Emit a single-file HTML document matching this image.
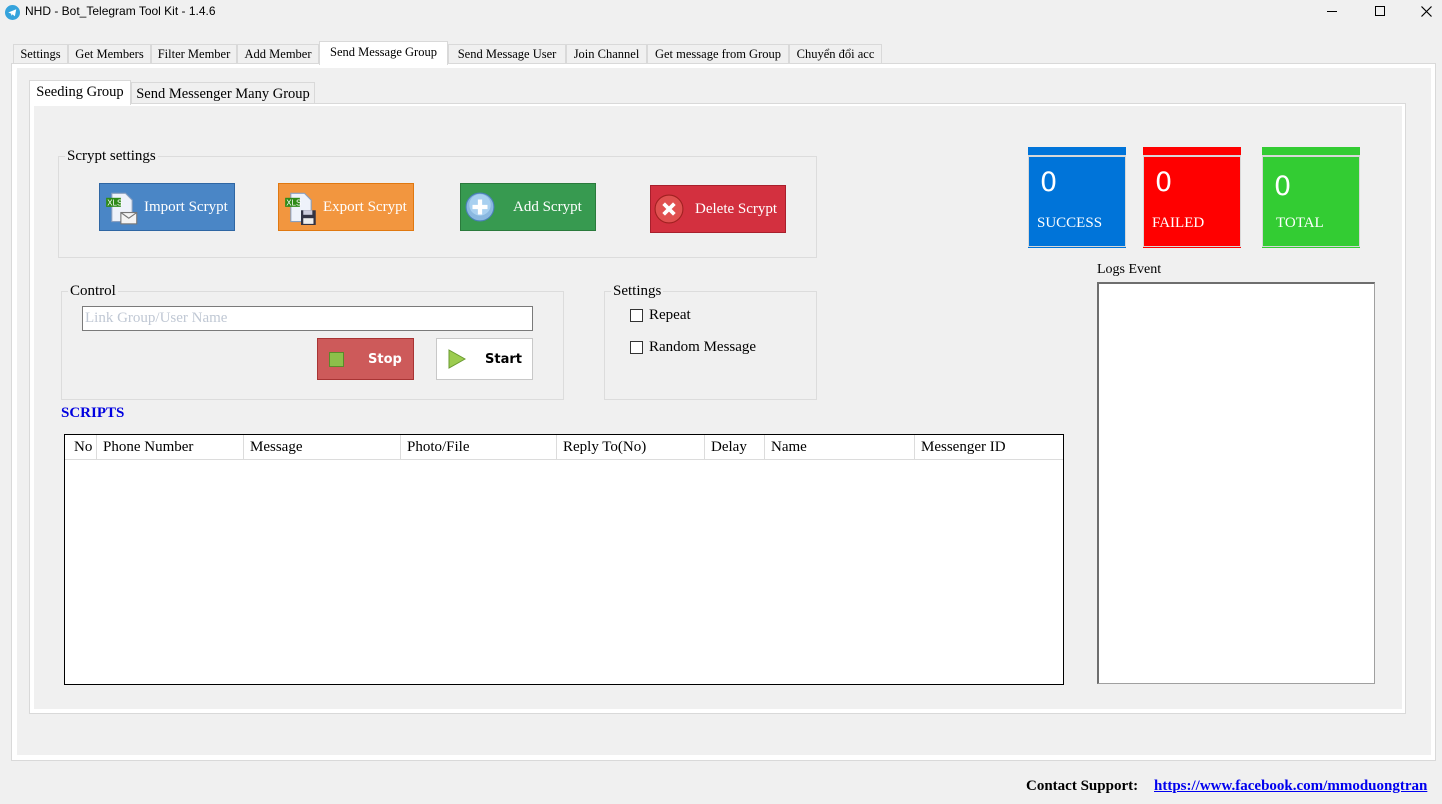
<!DOCTYPE html>
<html><head><meta charset="utf-8"><style>
*{box-sizing:border-box;margin:0;padding:0}
body{width:1442px;height:804px;background:#f0f0f0;position:relative;overflow:hidden;font-family:"Liberation Serif",serif;font-size:14px;color:#000}
.a{position:absolute}
.tab{position:absolute;top:44px;height:20px;border:1px solid #d9d9d9;background:#f0f0f0;font-size:12.5px;line-height:18px;text-align:center;white-space:nowrap}
.btn{position:absolute;color:#fff;font-size:15px;line-height:46px;white-space:nowrap}
.fs{position:absolute;border:1px solid #dcdcdc}
.lg{position:absolute;background:#f0f0f0;padding:0 2px;font-size:15px;line-height:16px}
.th{position:absolute;top:0;height:24px;border-right:1px solid #dcdcdc;line-height:24px;padding-left:6px;font-size:15px}
.stat{position:absolute;top:147px;width:98px;height:101px;color:#fff}
.stat .bar{height:8px}
.stat .body{position:absolute;top:10px;left:1px;right:1px;height:89px}
.stat .n{position:absolute;left:11px;top:10px;font-family:"DejaVu Sans",sans-serif;font-size:27px}
.stat .l{position:absolute;left:8px;top:58px;font-size:15px}
</style></head><body>
<svg class="a" style="left:5px;top:5px" width="15" height="15" viewBox="0 0 16 16"><circle cx="8" cy="8" r="8" fill="#35a3dc"/><path d="M3.5 8 L12 4.5 L10.5 12 L8 10 L6.8 11.5 L6.5 9.2 Z" fill="#fff"/></svg>
<div class="a" style="left:25px;top:4px;font-family:'Liberation Sans',sans-serif;font-size:12px">NHD - Bot_Telegram Tool Kit - 1.4.6</div>
<div class="a" style="left:1327px;top:11px;width:10px;height:1px;background:#000"></div>
<div class="a" style="left:1375px;top:6px;width:10px;height:10px;border:1px solid #000"></div>
<svg class="a" style="left:1421px;top:6px" width="11" height="11"><path d="M0.5 0.5L10.5 10.5M10.5 0.5L0.5 10.5" stroke="#000" stroke-width="1.2"/></svg>

<div class="a" style="left:11px;top:63px;width:1425px;height:698px;background:#fff;border:1px solid #d9d9d9"></div>
<div class="a" style="left:17px;top:68px;width:1414px;height:687px;background:#f0f0f0"></div>

<div class="tab" style="left:13px;width:55px">Settings</div>
<div class="tab" style="left:68px;width:83px">Get Members</div>
<div class="tab" style="left:151px;width:86px">Filter Member</div>
<div class="tab" style="left:237px;width:82px">Add Member</div>
<div class="tab" style="left:319px;top:41px;height:24px;width:129px;background:#fff;border-bottom:none;line-height:20px">Send Message Group</div>
<div class="tab" style="left:448px;width:118px">Send Message User</div>
<div class="tab" style="left:566px;width:81px">Join Channel</div>
<div class="tab" style="left:647px;width:142px">Get message from Group</div>
<div class="tab" style="left:789px;width:93px">Chuyển đổi acc</div>

<div class="a" style="left:29px;top:103px;width:1377px;height:611px;background:#fff;border:1px solid #d9d9d9"></div>
<div class="a" style="left:34px;top:106px;width:1368px;height:603px;background:#f0f0f0"></div>
<div class="a" style="left:29px;top:80px;width:102px;height:25px;background:#fff;border:1px solid #d9d9d9;border-bottom:none;font-size:14.5px;line-height:22px;text-align:center">Seeding Group</div>
<div class="a" style="left:131px;top:82px;width:184px;height:22px;border:1px solid #d9d9d9;border-bottom:none;font-size:14.5px;line-height:22px;text-align:center;white-space:nowrap">Send Messenger Many Group</div>

<div class="fs" style="left:58px;top:156px;width:759px;height:102px"></div>
<div class="lg" style="left:65px;top:148px">Scrypt settings</div>
<div class="btn" style="left:99px;top:183px;width:136px;height:48px;background:#4a86c6;border:1px solid #2f66a3"><svg class="a" style="left:6px;top:7px" width="32" height="34" viewBox="0 0 28 30"><path d="M5 2h12l6 6v19H5z" fill="#eef2fa" stroke="#8aa0c0"/><rect x="0" y="6" width="13" height="8" fill="#2e8a18"/><text x="1" y="13" font-size="7" fill="#fff" font-family="Liberation Sans">XLS</text><rect x="13" y="19" width="14" height="10" fill="#f4f4f4" stroke="#777"/><path d="M13 19l7 5 7-5" fill="none" stroke="#777"/></svg><span class="a" style="left:44px;top:0">Import Scrypt</span></div>
<div class="btn" style="left:278px;top:183px;width:136px;height:48px;background:#f2963f;border:1px solid #e07810"><svg class="a" style="left:6px;top:7px" width="32" height="34" viewBox="0 0 28 30"><path d="M5 2h12l6 6v19H5z" fill="#eef2fa" stroke="#8aa0c0"/><rect x="0" y="6" width="13" height="8" fill="#2e8a18"/><text x="1" y="13" font-size="7" fill="#fff" font-family="Liberation Sans">XLS</text><rect x="14" y="17" width="13" height="13" fill="#334"/><rect x="16" y="17" width="8" height="4" fill="#ccd"/><rect x="16" y="24" width="9" height="5" fill="#eee"/></svg><span class="a" style="left:44px;top:0">Export Scrypt</span></div>
<div class="btn" style="left:460px;top:183px;width:136px;height:48px;background:#379a50;border:1px solid #2a7a3c"><svg class="a" style="left:4px;top:8px" width="30" height="30" viewBox="0 0 28 28"><circle cx="14" cy="14" r="13" fill="#8ab8e0" stroke="#4a7fb8"/><circle cx="14" cy="12" r="10" fill="#a8d0f0"/><path d="M14 7v14M7 14h14" stroke="#fff" stroke-width="4"/></svg><span class="a" style="left:52px;top:0">Add Scrypt</span></div>
<div class="btn" style="left:650px;top:185px;width:136px;height:48px;background:#d3303f;border:1px solid #a81f2c"><svg class="a" style="left:3px;top:8px" width="30" height="30" viewBox="0 0 28 28"><circle cx="14" cy="14" r="13" fill="#e05050" stroke="#a02020"/><path d="M9 9l10 10M19 9l-10 10" stroke="#fff" stroke-width="3.5"/></svg><span class="a" style="left:44px;top:0">Delete Scrypt</span></div>

<div class="fs" style="left:61px;top:291px;width:503px;height:109px"></div>
<div class="lg" style="left:68px;top:283px">Control</div>
<div class="a" style="left:82px;top:306px;width:451px;height:25px;background:#fff;border:1px solid #7a7a7a;color:#c0c8d4;font-size:15px;line-height:22px;padding-left:2px">Link Group/User Name</div>
<div class="a" style="left:317px;top:338px;width:97px;height:42px;background:#cd5a5a;border:1px solid #a83434;color:#fff;font-family:'DejaVu Sans',sans-serif;font-weight:bold;font-size:13px;line-height:42px"><div class="a" style="left:11px;top:13px;width:15px;height:15px;background:#8cbf4a;border:1px solid #5a8a2a"></div><span class="a" style="left:50px">Stop</span></div>
<div class="a" style="left:436px;top:338px;width:97px;height:42px;background:#fff;border:1px solid #c8c8c8;font-family:'DejaVu Sans',sans-serif;font-weight:bold;font-size:13px;line-height:42px"><svg class="a" style="left:11px;top:10px" width="18" height="20"><path d="M1 1L17 10L1 19Z" fill="#9ccc50" stroke="#6a9a30"/></svg><span class="a" style="left:48px">Start</span></div>

<div class="fs" style="left:604px;top:291px;width:213px;height:109px"></div>
<div class="lg" style="left:611px;top:283px">Settings</div>
<div class="a" style="left:630px;top:309px;width:13px;height:13px;border:1px solid #333;background:#fff"></div>
<div class="a" style="left:649px;top:307px;font-size:15px">Repeat</div>
<div class="a" style="left:630px;top:341px;width:13px;height:13px;border:1px solid #333;background:#fff"></div>
<div class="a" style="left:649px;top:339px;font-size:15px">Random Message</div>

<div class="a" style="left:61px;top:405px;color:#0000e0;font-weight:bold;font-size:15px">SCRIPTS</div>
<div class="a" style="left:64px;top:434px;width:1000px;height:251px;background:#fff;border:1px solid #000">
<div class="a" style="left:0;top:0;width:998px;height:25px;border-bottom:1px solid #dcdcdc"></div>
<div class="th" style="left:2px;width:30px;padding-left:7px">No</div>
<div class="th" style="left:32px;width:147px">Phone Number</div>
<div class="th" style="left:179px;width:157px">Message</div>
<div class="th" style="left:336px;width:156px">Photo/File</div>
<div class="th" style="left:492px;width:148px">Reply To(No)</div>
<div class="th" style="left:640px;width:60px">Delay</div>
<div class="th" style="left:700px;width:150px">Name</div>
<div class="th" style="left:850px;width:148px;border-right:none">Messenger ID</div>
</div>

<div class="stat" style="left:1028px"><div class="bar" style="background:#0074d9"></div><div class="a" style="top:8px;left:0;width:98px;height:93px;background:#d8d8d8"></div><div class="body" style="background:#0074d9"><div class="n">0</div><div class="l">SUCCESS</div></div><div class="a" style="left:0;bottom:0;width:98px;height:1px;background:#0074d9"></div></div>
<div class="stat" style="left:1143px"><div class="bar" style="background:#f00"></div><div class="a" style="top:8px;left:0;width:98px;height:93px;background:#d8d8d8"></div><div class="body" style="background:#f00"><div class="n">0</div><div class="l">FAILED</div></div><div class="a" style="left:0;bottom:0;width:98px;height:1px;background:#f00"></div></div>
<div class="stat" style="left:1262px"><div class="bar" style="background:#33cc33"></div><div class="a" style="top:8px;left:0;width:98px;height:93px;background:#d8d8d8"></div><div class="body" style="background:#33cc33"><div class="n" style="top:14px">0</div><div class="l" style="left:13px">TOTAL</div></div><div class="a" style="left:0;bottom:0;width:98px;height:1px;background:#33cc33"></div></div>

<div class="a" style="left:1097px;top:262px;font-size:14px">Logs Event</div>
<div class="a" style="left:1097px;top:282px;width:278px;height:402px;background:#fff;border:1px solid #a0a0a0;border-top:2px solid #6e6e6e;border-left:2px solid #6e6e6e"></div>

<div class="a" style="left:1026px;top:778px;font-weight:bold;font-size:15px">Contact Support:</div>
<div class="a" style="left:1154px;top:778px;font-weight:bold;font-size:15px;color:#0000ee;text-decoration:underline">https://www.facebook.com/mmoduongtran</div>
</body></html>
